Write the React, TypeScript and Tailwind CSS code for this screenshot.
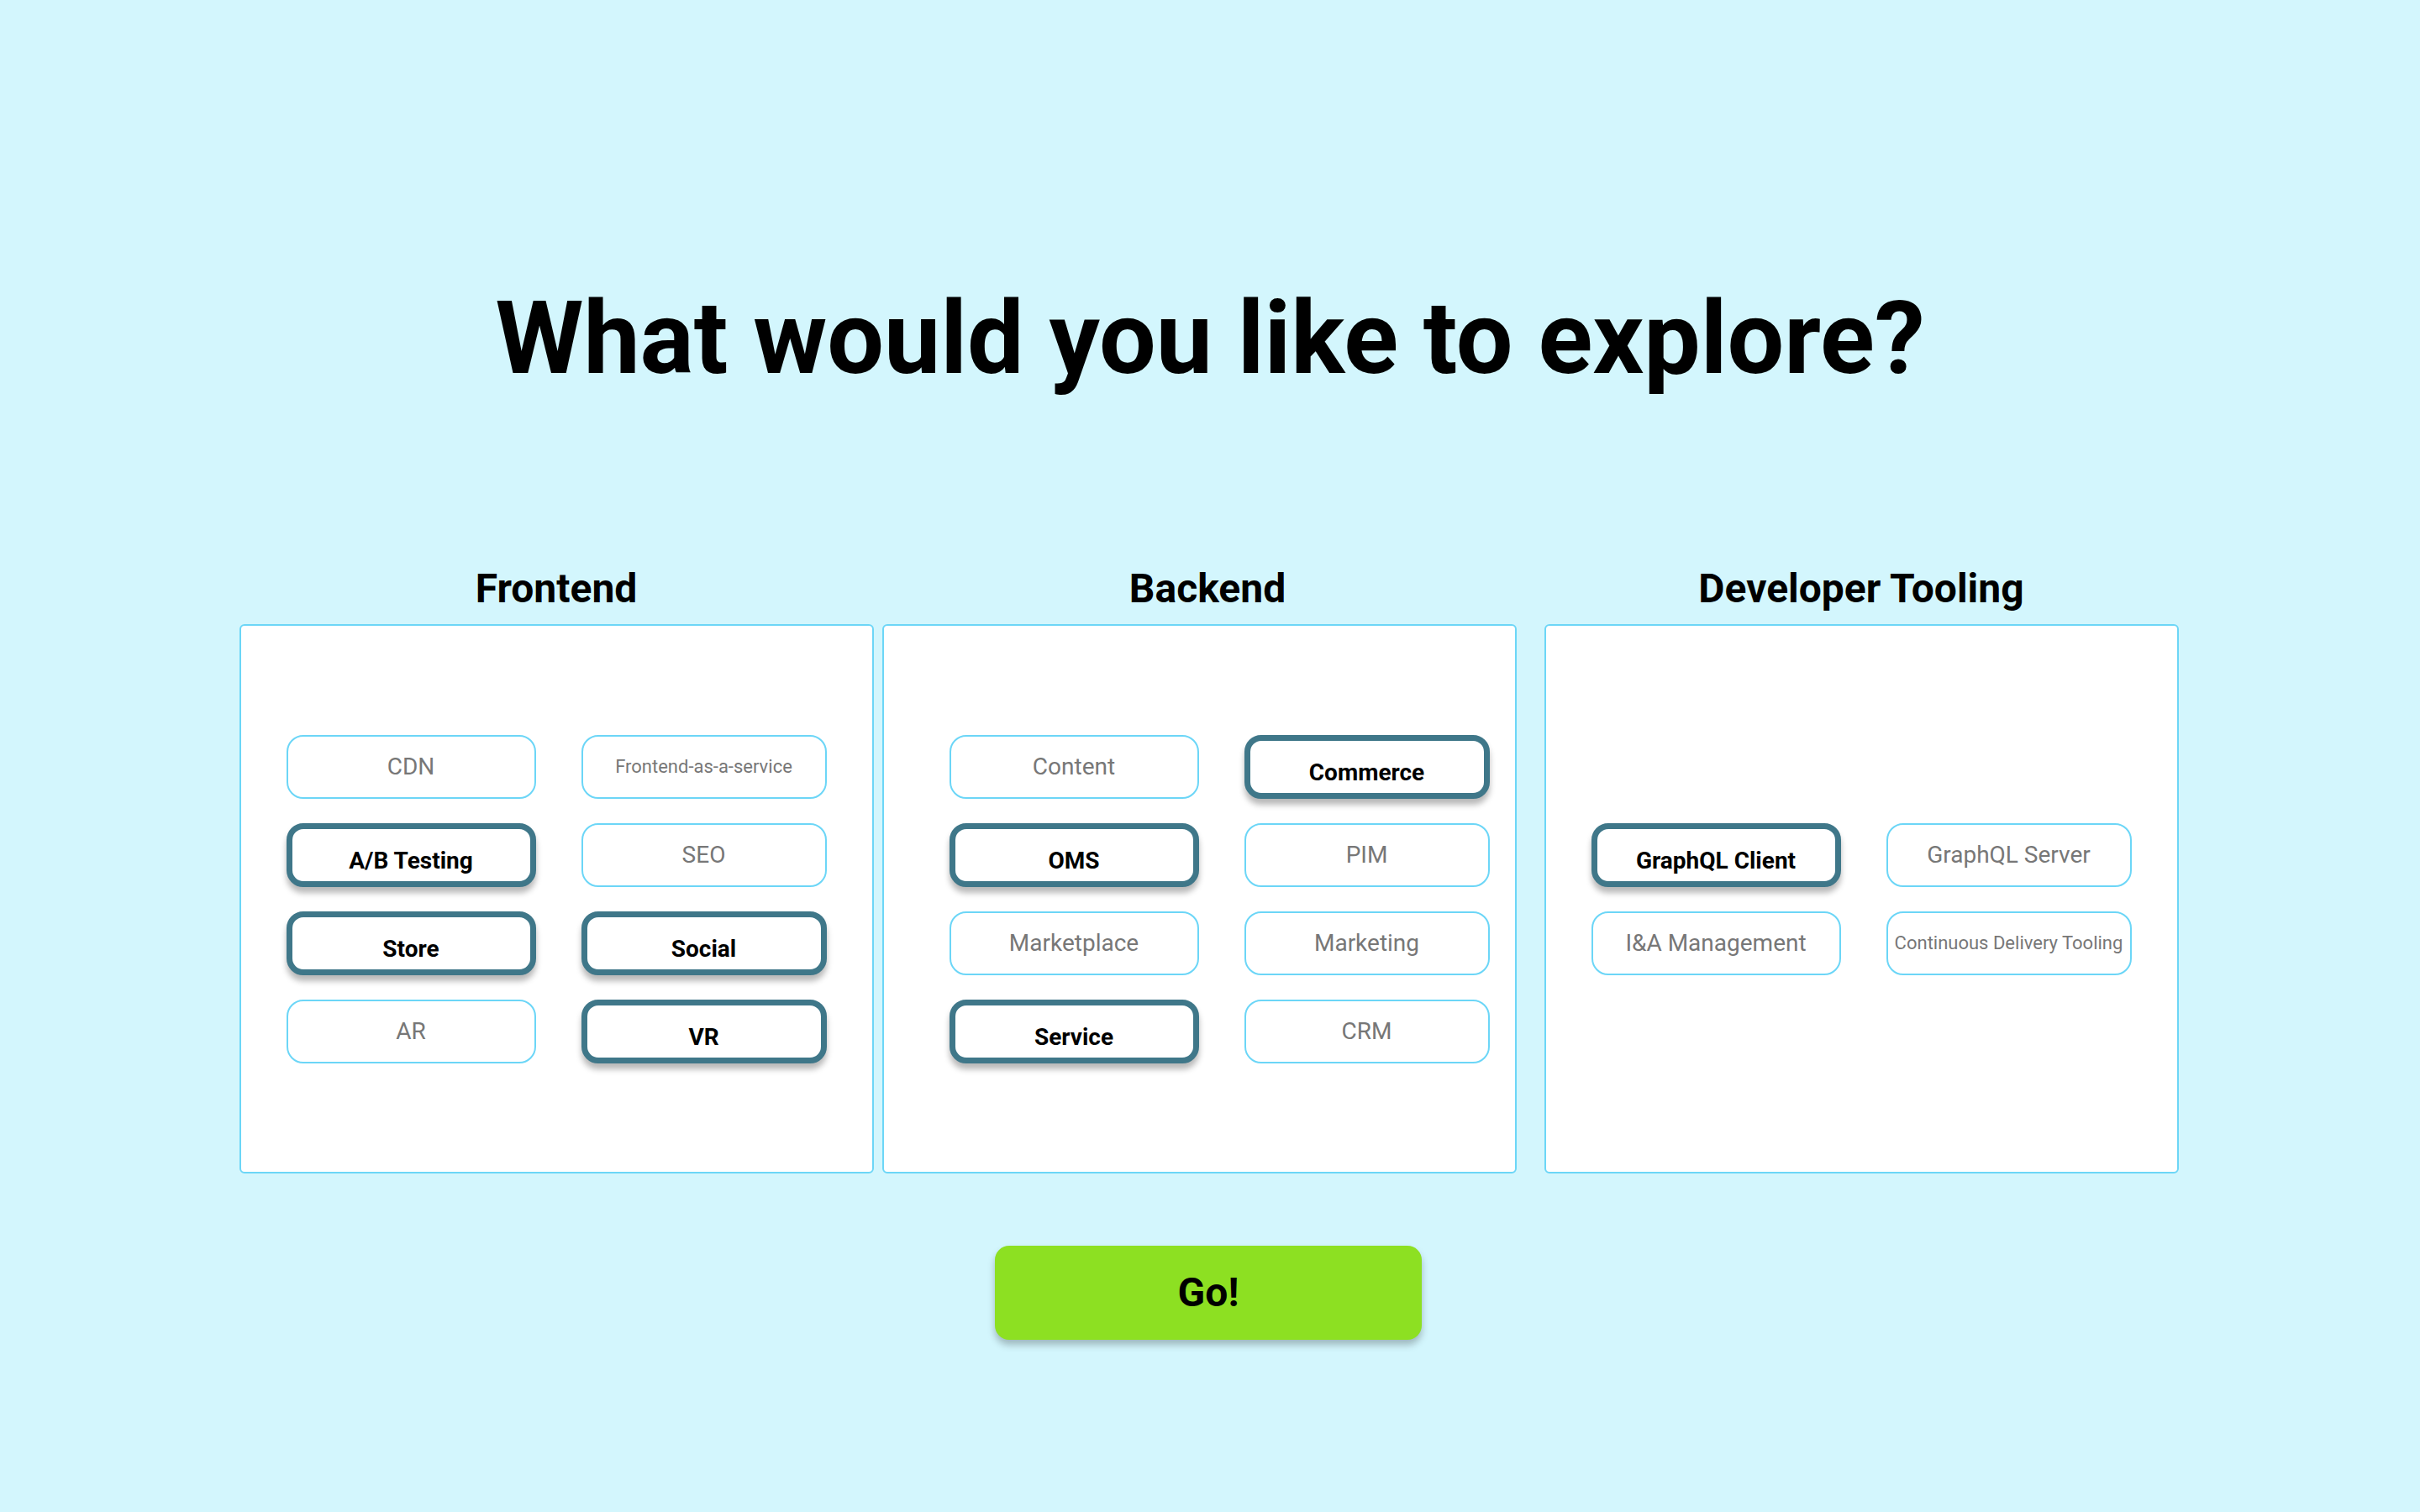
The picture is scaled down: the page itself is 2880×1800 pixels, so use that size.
import React from "react";

type Item = { label: string; selected?: boolean; small?: boolean };

const frontend: Item[] = [
  { label: "CDN" },
  { label: "Frontend-as-a-service", small: true },
  { label: "A/B Testing", selected: true },
  { label: "SEO" },
  { label: "Store", selected: true },
  { label: "Social", selected: true },
  { label: "AR" },
  { label: "VR", selected: true },
];

const backend: Item[] = [
  { label: "Content" },
  { label: "Commerce", selected: true },
  { label: "OMS", selected: true },
  { label: "PIM" },
  { label: "Marketplace" },
  { label: "Marketing" },
  { label: "Service", selected: true },
  { label: "CRM" },
];

const tooling: Item[] = [
  { label: "GraphQL Client", selected: true },
  { label: "GraphQL Server" },
  { label: "I&A Management" },
  { label: "Continuous Delivery Tooling", small: true },
];

function Chip({ item }: { item: Item }) {
  if (item.selected) {
    return (
      <div className="h-[76px] rounded-[20px] border-[7px] border-[#3f7789] bg-white pt-[14px] flex items-center justify-center text-[28px] font-bold text-black shadow-[0_7px_7px_rgba(0,0,0,0.28)]">
        {item.label}
      </div>
    );
  }
  return (
    <div
      className={
        "h-[76px] rounded-[20px] border-2 border-[#6cd6f7] bg-white flex items-center justify-center text-[#777777] whitespace-nowrap " +
        (item.small ? "text-[22px]" : "text-[28px]")
      }
    >
      {item.label}
    </div>
  );
}

function Column({
  title,
  items,
  titleClass,
  innerClass,
}: {
  title: string;
  items: Item[];
  titleClass?: string;
  innerClass?: string;
}) {
  return (
    <div className="w-[755px] flex flex-col items-center">
      <h2 className={"text-[48px] leading-[56px] font-bold text-black " + (titleClass ?? "")}>{title}</h2>
      <div
        className={
          "mt-[14px] w-[755px] h-[654px] bg-white border-2 border-[#6cd6f7] rounded-[6px] flex items-center justify-center " +
          (innerClass ?? "")
        }
      >
        <div className="grid grid-cols-[297px_292px] gap-x-[54px] gap-y-[29px]">
          {items.map((it) => (
            <Chip key={it.label} item={it} />
          ))}
        </div>
      </div>
    </div>
  );
}

export default function App() {
  return (
    <div className="min-h-screen w-full bg-[#d3f6fd] flex flex-col items-center font-['Roboto',sans-serif] pb-[200px]">
      <h1 className="mt-[333px] text-[120px] leading-[141px] font-bold text-black whitespace-nowrap">
        What would you like to explore?
      </h1>
      <div className="mt-[199px] mr-[3px] flex">
        <Column title="Frontend" items={frontend} />
        <div className="w-[10px]" />
        <Column title="Backend" items={backend} titleClass="ml-[20px]" innerClass="pl-[48px]" />
        <div className="w-[33px]" />
        <Column title="Developer Tooling" items={tooling} />
      </div>
      <button className="mt-[86px] mr-[4px] w-[508px] h-[112px] rounded-[17px] bg-[#8de022] text-[48px] font-bold text-black shadow-[0_6px_8px_rgba(0,0,0,0.25)] flex items-center justify-center">
        Go!
      </button>
    </div>
  );
}
